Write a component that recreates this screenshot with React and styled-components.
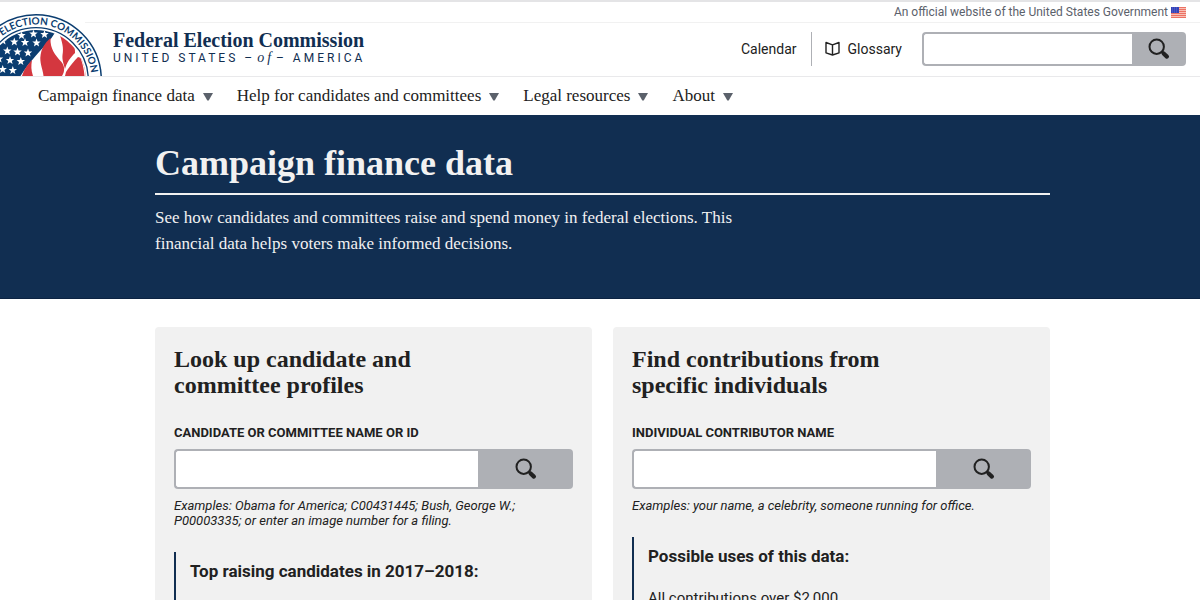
import React from "react";
import styled, { createGlobalStyle } from "styled-components";

const serif = '"Liberation Serif", "Times New Roman", serif';
const sans = 'Roboto, "Liberation Sans", sans-serif';
const navy = "#112e51";
const ink = "#212121";
const grey = "#aeb0b5";

const GlobalStyle = createGlobalStyle`
  *, *::before, *::after { box-sizing: border-box; }
  body { margin: 0; background: #fff; color: ${ink}; font-family: ${sans}; }
  h1, h2, h3, p, ul { margin: 0; padding: 0; }
  a { color: inherit; text-decoration: none; }
`;

const Masthead = styled.header`
  position: relative;
  border-top: 2px solid #e4e4e6;
  border-bottom: 1px solid #e9e9eb;
`;

const Disclaimer = styled.div`
  display: flex;
  align-items: center;
  justify-content: flex-end;
  gap: 3px;
  height: 21px;
  padding-right: 14px;
  border-bottom: 1px solid #f1f1f1;
  font-size: 12px;
  line-height: 20px;
  color: #5b616b;
`;

const SealLink = styled.a`
  position: absolute;
  left: 0;
  bottom: 0;
  line-height: 0;
`;

const HeaderRow = styled.div`
  display: flex;
  align-items: center;
  justify-content: space-between;
  height: 53px;
  padding: 0 14px 2px 113px;
`;

const Brand = styled.a`
  display: flex;
  flex-direction: column;
  padding-bottom: 2px;
  color: ${navy};
`;

const BrandName = styled.span`
  font: bold 20px/20px ${serif};
`;

const BrandTag = styled.span`
  font-size: 12px;
  line-height: 16px;
  letter-spacing: 3px;
  em {
    margin: 0 2px;
    font-family: ${serif};
    font-size: 14px;
    line-height: 12px;
  }
`;

const Tools = styled.div`
  display: flex;
  align-items: center;
`;

const ToolLink = styled.a`
  padding-right: 14px;
  border-right: 1px solid ${grey};
  font-size: 14px;
  line-height: 34px;
`;

const ToolButton = styled.button`
  display: flex;
  align-items: center;
  gap: 8px;
  margin: 0 20px 0 13px;
  padding: 0;
  border: 0;
  background: none;
  color: ${ink};
  font: 14px/34px ${sans};
`;

const SearchForm = styled.form`
  display: flex;
  width: ${(p) => (p.$compact ? "264px" : "100%")};
  height: ${(p) => (p.$compact ? "34px" : "40px")};
`;

const SearchInput = styled.input`
  flex: 1;
  min-width: 0;
  padding: 0 8px;
  border: 2px solid ${grey};
  border-right: 0;
  border-radius: 4px 0 0 4px;
  background: #fff;
  font: 16px ${sans};
`;

const SearchButton = styled.button`
  display: flex;
  align-items: center;
  justify-content: center;
  width: ${(p) => (p.$compact ? "54px" : "95px")};
  padding: 0;
  border: 0;
  border-radius: 0 4px 4px 0;
  background: ${grey};
  color: ${ink};
`;

const Nav = styled.nav`
  display: flex;
  gap: 24px;
  height: 38px;
  padding-left: 38px;
`;

const NavButton = styled.button`
  display: flex;
  align-items: center;
  gap: 8px;
  padding: 0;
  border: 0;
  background: none;
  color: ${ink};
  font: 17px/38px ${serif};
`;

const Hero = styled.section`
  padding: 28px 150px 41px 155px;
  border-bottom: 1px solid #0c2342;
  background: ${navy};
  color: #f1f1f1;
`;

const HeroTitle = styled.h1`
  height: 52px;
  border-bottom: 2px solid #f1f1f1;
  font: bold 36px/40px ${serif};
`;

const HeroText = styled.p`
  max-width: 600px;
  padding-top: 10px;
  font: 17px/26px ${serif};
`;

const Cards = styled.main`
  display: grid;
  grid-template-columns: 1fr 1fr;
  gap: 21px;
  padding: 28px 150px 28px 155px;
`;

const Card = styled.section`
  display: flex;
  flex-direction: column;
  padding: 19px;
  border-radius: 4px;
  background: #f1f1f1;
`;

const CardTitle = styled.h2`
  max-width: 280px;
  font: bold 24px/26px ${serif};
`;

const FieldLabel = styled.label`
  display: block;
  padding: 25px 0 6px;
  font-size: 13px;
  font-weight: bold;
  line-height: 20px;
  text-transform: uppercase;
`;

const Hint = styled.p`
  max-width: 360px;
  padding-top: 9px;
  font-size: 13px;
  font-style: italic;
  line-height: 15px;
`;

const Aside = styled.div`
  flex: 1;
  margin-top: 24px;
  padding: 8px 0 8px 14px;
  border-left: 2px solid ${navy};
`;

const AsideTitle = styled.h3`
  font: bold 17px/22px ${sans};
`;

const UsesList = styled.ul`
  padding-top: 20px;
  list-style: none;
  font-size: 15px;
  line-height: 22px;
`;

const starPoints = [
  [21.5, 35.5], [33.5, 34], [44.5, 34.5],
  [3, 41], [14.3, 42], [25, 42.5], [36.5, 43],
  [7.3, 51], [17.5, 52], [28, 53],
  [-1, 59], [10, 60.5], [20.8, 61.5],
  [2.7, 69.5], [12.8, 70.5],
];

function Star({ x, y, size }) {
  const points = Array.from({ length: 10 }, (_, i) => {
    const r = i % 2 ? size * 0.42 : size;
    const a = (Math.PI / 5) * i - Math.PI / 2;
    return `${(x + r * Math.cos(a)).toFixed(1)},${(y + r * Math.sin(a)).toFixed(1)}`;
  });
  return <polygon points={points.join(" ")} fill="#fff" />;
}

function Seal() {
  return (
    <svg width="104" height="63" viewBox="0 13 104 63" role="img" aria-label="Seal of the Federal Election Commission">
      <defs>
        <clipPath id="sealDisc">
          <circle cx="36" cy="80" r="50" />
        </clipPath>
        <path id="sealArc" d="M-19.5 80a55.5 55.5 0 0 1 111 0" />
      </defs>
      <rect x="0" y="13" width="85" height="63" fill="#fff" />
      <circle cx="36" cy="80" r="65.3" fill="#fff" stroke="#0b3d70" strokeWidth="1.5" />
      <circle cx="36" cy="80" r="52.3" fill="none" stroke="#0b3d70" strokeWidth="1.3" />
      <g clipPath="url(#sealDisc)">
        <path d="M-20 25H60L51.5 38C43 48 29 62 20.5 76H-20Z" fill="#0b3d70" />
        {starPoints.map(([x, y]) => (
          <Star key={`${x}-${y}`} x={x} y={y} size={4.4} />
        ))}
        <path d="M22 76C24 69 28 64 32 60C31 66 31 70 33 76Z" fill="#d4373f" />
        <path d="M50.5 38C45 43 41 48 40.3 58C40.3 65 43 70 43.5 76H62C65 71 65 67 61.5 62C55 55 50 49 50.5 38Z" fill="#d4373f" />
        <path d="M59 33C62 41 64 48 62.5 55C62 60 63.5 63 65 69C67 62 70 58 75 53C75.5 46 72 39 66 34Z" fill="#d4373f" />
        <path d="M66 72L68 69C71 65 74 61 78 57L88 60V76H65Z" fill="#d4373f" />
        <path d="M79 54C82 61 84 68 84.5 76H90V50Z" fill="#fff" />
      </g>
      <text fill="#0b3d70" fontFamily='Lato, "Liberation Sans", sans-serif' fontSize="10" fontWeight="bold">
        <textPath href="#sealArc" startOffset="96%" textAnchor="end">
          ELECTION COMMISSION
        </textPath>
      </text>
    </svg>
  );
}

function Flag() {
  return (
    <svg width="15" height="11" viewBox="0 0 15 11" role="img" aria-label="United States flag">
      <rect width="15" height="11" fill="#f8c0b6" />
      {[0, 2, 4, 6, 8, 10].map((y) => (
        <rect key={y} y={y} width="15" height="1" fill="#ec7264" />
      ))}
      <rect width="8" height="6" fill="#3443b8" />
      {[1, 3, 5].map((y) => [1, 3, 5].map((x) => <rect key={`${x}${y}`} x={x} y={y - 0.3} width="1" height="0.6" fill="#7d88dd" />))}
    </svg>
  );
}

function SearchIcon() {
  return (
    <svg width="22" height="22" viewBox="0 0 22 22" fill="none" stroke="currentColor" aria-hidden="true">
      <circle cx="8.7" cy="8.7" r="7.2" strokeWidth="2" />
      <path d="M13.6 13.6L15.5 15.2" strokeWidth="2.6" />
      <path d="M15.6 15.5L18.9 18.6" strokeWidth="4.2" strokeLinecap="round" />
    </svg>
  );
}

function BookIcon() {
  return (
    <svg width="15" height="15" viewBox="0 0 15 15" fill="none" stroke="currentColor" strokeWidth="1.4" strokeLinejoin="round" aria-hidden="true">
      <path d="M7.5 3.8L1 1.5V11.8L7.5 14L14 11.8V1.5ZM7.5 3.8V14" />
    </svg>
  );
}

function Caret() {
  return (
    <svg width="10" height="9" viewBox="0 0 10 9" aria-hidden="true">
      <path d="M0 1H10L5.7 8.5H4.3Z" fill="#5b616b" />
    </svg>
  );
}

function Search({ id, compact, label }) {
  return (
    <SearchForm $compact={compact} role="search" onSubmit={(e) => e.preventDefault()}>
      <SearchInput id={id} type="text" aria-label={label} />
      <SearchButton $compact={compact} type="submit" aria-label="Search">
        <SearchIcon />
      </SearchButton>
    </SearchForm>
  );
}

const menus = ["Campaign finance data", "Help for candidates and committees", "Legal resources", "About"];

export default function App() {
  return (
    <>
      <GlobalStyle />
      <Masthead>
        <Disclaimer>
          <span>An official website of the United States Government</span>
          <Flag />
        </Disclaimer>
        <HeaderRow>
          <Brand href="#home">
            <BrandName>Federal Election Commission</BrandName>
            <BrandTag>
              UNITED STATES –<em>of</em>– AMERICA
            </BrandTag>
          </Brand>
          <Tools>
            <ToolLink href="#calendar">Calendar</ToolLink>
            <ToolButton type="button">
              <BookIcon />
              Glossary
            </ToolButton>
            <Search id="site-search" compact label="Search the site" />
          </Tools>
        </HeaderRow>
        <SealLink href="#home">
          <Seal />
        </SealLink>
      </Masthead>
      <Nav>
        {menus.map((name) => (
          <NavButton key={name} type="button">
            {name}
            <Caret />
          </NavButton>
        ))}
      </Nav>
      <Hero>
        <HeroTitle>Campaign finance data</HeroTitle>
        <HeroText>
          See how candidates and committees raise and spend money in federal elections. This financial data helps voters
          make informed decisions.
        </HeroText>
      </Hero>
      <Cards>
        <Card>
          <CardTitle>Look up candidate and committee profiles</CardTitle>
          <FieldLabel htmlFor="committee">Candidate or committee name or ID</FieldLabel>
          <Search id="committee" />
          <Hint>Examples: Obama for America; C00431445; Bush, George W.; P00003335; or enter an image number for a filing.</Hint>
          <Aside>
            <AsideTitle>Top raising candidates in 2017–2018:</AsideTitle>
          </Aside>
        </Card>
        <Card>
          <CardTitle>Find contributions from specific individuals</CardTitle>
          <FieldLabel htmlFor="contributor">Individual contributor name</FieldLabel>
          <Search id="contributor" />
          <Hint>Examples: your name, a celebrity, someone running for office.</Hint>
          <Aside>
            <AsideTitle>Possible uses of this data:</AsideTitle>
            <UsesList>
              <li>All contributions over $2,000</li>
            </UsesList>
          </Aside>
        </Card>
      </Cards>
    </>
  );
}
